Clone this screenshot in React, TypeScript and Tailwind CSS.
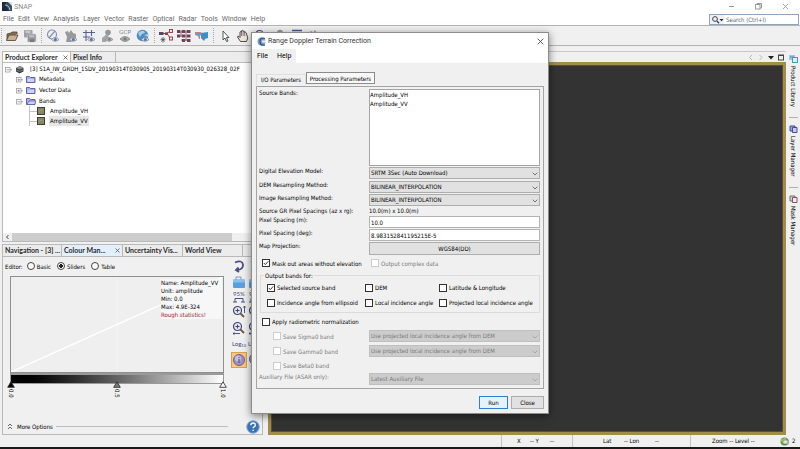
import { useId, useState } from 'react';
import type { ReactNode } from 'react';

const uiFont = 'font-["DejaVu_Sans_Condensed","DejaVu_Sans",sans-serif]';
const tabFont = 'font-["Lato","Liberation_Sans",sans-serif]';
const shellFont = 'font-["Roboto","Noto_Sans",sans-serif]';

const mainMenu = ['File', 'Edit', 'View', 'Analysis', 'Layer', 'Vector', 'Raster', 'Optical', 'Radar', 'Tools', 'Window', 'Help'];

function Icon({ size = 14, children }: { size?: number; children: ReactNode }) {
  return (
    <svg width={size} height={size} viewBox="0 0 14 14" fill="none" className="shrink-0" aria-hidden>
      {children}
    </svg>
  );
}

function Eye() {
  return (
    <>
      <path d="M5.5 10.5q3.5-4 7.5 0q-4 3.600-7.500 0z" fill="#dfe5ee" stroke="#7f8ba0" strokeWidth=".8" />
      <circle cx="9.300" cy="10.400" r="1.500" fill="#5f7599" />
    </>
  );
}

function OpenIcon() {
  return (
    <Icon>
      <path d="M2 11V5l4-1 1-1h5v2" fill="#8a7458" stroke="#4d3f30" strokeWidth=".8" />
      <path d="M1.500 11.500L4 6h9l-2.500 5.500z" fill="#c9b291" stroke="#4d3f30" strokeWidth=".8" />
    </Icon>
  );
}

function SaveAllIcon() {
  return (
    <Icon>
      <rect x="1" y="1" width="8.500" height="7.500" rx="1" fill="#9c9fa3" />
      <rect x="2.500" y="1.500" width="5" height="2.500" fill="#c5c8ca" />
      <rect x="4.500" y="5" width="8.500" height="8" rx="1" fill="#8f9296" stroke="#d5d5d5" strokeWidth=".6" />
      <rect x="6" y="6" width="5.500" height="2.500" fill="#b9bcbf" />
      <rect x="7" y="10.500" width="4" height="2.500" fill="#777b80" />
    </Icon>
  );
}

function NoDataIcon() {
  return (
    <Icon>
      <circle cx="6" cy="5.500" r="4.500" stroke="#8590b4" strokeWidth="1.200" />
      <path d="M3 9l6-7" stroke="#8590b4" strokeWidth="1.200" />
      <Eye />
    </Icon>
  );
}

function ShapesIcon() {
  return (
    <Icon>
      <path d="M1 3l3-1 1 2 2-3 2 3 3 1v4l-5 4H2l1-5z" fill="#98999b" />
      <Eye />
    </Icon>
  );
}

function GridIcon() {
  return (
    <Icon>
      <path d="M1 3.500h12M1 8h7M4 1v11M9.500 1v6" stroke="#56638f" strokeWidth="1.100" />
      <Eye />
    </Icon>
  );
}

function PinIcon() {
  return (
    <Icon>
      <circle cx="8" cy="3.500" r="2.800" fill="#939597" />
      <path d="M7 5L2 9v4h4l3-7z" fill="#a3a5a7" />
      <path d="M5.500 10.500q3.500-4 7.500 0q-4 3.600-7.500 0z" fill="#b5b7b9" stroke="#8b8d90" strokeWidth=".8" />
      <circle cx="9.300" cy="10.400" r="1.400" fill="#808286" />
    </Icon>
  );
}

function GcpIcon() {
  return (
    <span className="flex w-[14px] flex-col items-center">
      <span className={`text-[6px] leading-[6px] text-[#888b90] ${tabFont}`}>GCP</span>
      <svg width="12" height="8" viewBox="0 0 12 8" aria-hidden>
        <path d="M1 4q5-5 10 0q-5 5-10 0z" fill="#a4a6a9" stroke="#85888d" strokeWidth=".8" />
        <circle cx="6" cy="4" r="1.500" fill="#777b82" />
      </svg>
    </span>
  );
}

function GlobeIcon() {
  return (
    <Icon>
      <circle cx="6.500" cy="6.500" r="5.800" fill="#4f8ac4" />
      <path d="M2 4q3-3 6-2l1 2-3 1-2 3zM8 6l4-1v3z" fill="#a8d0ea" />
      <Eye />
    </Icon>
  );
}

function GraphIcon() {
  return (
    <Icon>
      <path d="M4 4.500h4M8 4.500L11 2M8 4.500L11 9" stroke="#9a4454" strokeWidth="1" />
      <rect x="0" y="3" width="4.500" height="3" fill="#5a4a59" />
      <rect x="6" y="3.300" width="3" height="2.700" fill="#7a4a56" />
      <rect x="10.500" y="0.500" width="3" height="3" stroke="#9a4454" />
      <rect x="10.500" y="8" width="3" height="3" stroke="#9a4454" />
      <path d="M4 8v5.500M1.500 10.700h5M2.200 9l3.600 3.600M5.800 9l-3.600 3.600" stroke="#444" strokeWidth=".7" />
    </Icon>
  );
}

function BatchIcon() {
  return (
    <Icon>
      <path d="M1 3h12M1 7h12M4 11h9M4 1v7M9 1v11" stroke="#8c4152" strokeWidth=".8" />
      <g fill="#6a4557">
        <rect x="0" y="1" width="3" height="3" />
        <rect x="5" y="1" width="3" height="3" />
        <rect x="10" y="1" width="3.500" height="3" />
        <rect x="0" y="5.500" width="3" height="3" />
        <rect x="5" y="5.500" width="3" height="3" />
        <rect x="10" y="5.500" width="3.500" height="3" />
        <rect x="5" y="10" width="3" height="3" />
        <rect x="10" y="10" width="3.500" height="3" />
      </g>
    </Icon>
  );
}

function WorldMapIcon() {
  return (
    <Icon>
      <path d="M0 3h6l1 2-2 2v3H4L3 7 0 6z" fill="#b08b93" />
      <path d="M6 4l7-1v6l-3 1-1 2-3-3z" fill="#3d8fc6" />
      <path d="M1 4h4v2H2z" fill="#5aa2cf" />
    </Icon>
  );
}

function PointerIcon() {
  return (
    <Icon>
      <path d="M5 2v9l2-2 1.500 3.500L10 12 8.500 8.500H11z" fill="#fff" stroke="#444" strokeWidth=".9" />
    </Icon>
  );
}

function HandIcon() {
  return (
    <Icon>
      <path
        d="M4.500 12.500L1.500 8q0-1.500 1.500-.5l1 1V3q.8-1 1.500 0V1.800q.8-1 1.600 0V2.500q.8-1 1.600 0v1q.9-.8 1.500.3L11.800 9l-1.300 3.500z"
        fill="#efe6dc"
        stroke="#3c3835"
        strokeWidth=".9"
      />
      <path d="M5.500 3v4M7.100 2.500V7M8.700 3v4" stroke="#3c3835" strokeWidth=".6" />
    </Icon>
  );
}

function LensIcon({ mark }: { mark?: string }) {
  return (
    <Icon>
      <circle cx="5.500" cy="5.500" r="4" fill="#e4e6ef" stroke="#43466f" strokeWidth="1.200" />
      <path d="M3.500 5.500h4M5.500 3.500v4" stroke="#43466f" />
      <path d="M8.500 8.500l3.500 3.500" stroke="#6a5a4c" strokeWidth="1.800" />
      {mark ? <path d={mark} stroke="#43466f" strokeWidth=".9" /> : null}
    </Icon>
  );
}

function RangeIcon() {
  return (
    <Icon>
      <path d="M2 1.500h10M2 4h10" stroke="#4b5a94" strokeWidth="1.500" />
      <rect x="3" y="6" width="8" height="6" stroke="#666" />
    </Icon>
  );
}

function Separator() {
  return <span className="mx-[4px] h-[15px] border-l border-dotted border-[#a9a9a9]" />;
}

const toolGroups: [string, () => ReactNode][][] = [
  [['Open product', OpenIcon], ['Save all', SaveAllIcon]],
  [
    ['No-data overlay', NoDataIcon],
    ['Geometry overlay', ShapesIcon],
    ['Graticule overlay', GridIcon],
    ['Pin overlay', PinIcon],
    ['GCP overlay', GcpIcon],
    ['World map overlay', GlobeIcon],
  ],
  [['Graph builder', GraphIcon], ['Batch processing', BatchIcon], ['World map', WorldMapIcon]],
  [
    ['Select', PointerIcon],
    ['Pan', HandIcon],
    ['Zoom', LensIcon],
    ['Pins', PinIcon],
    ['Range finder', RangeIcon],
    ['Magic wand', ShapesIcon],
  ],
];

function Toolbar() {
  return (
    <div className="flex h-[21px] shrink-0 items-center border-y border-[#b4b4b4] bg-[#f0f0f0] pl-px">
      {toolGroups.map((group, i) => (
        <div key={i} className="flex items-center">
          {i === 0 ? <span className="mr-[3px] h-[15px] border-l border-dotted border-[#a9a9a9]" /> : <Separator />}
          <div className="flex items-center gap-1">
            {group.map(([label, Glyph]) => (
              <button key={label} type="button" aria-label={label} className="flex">
                <Glyph />
              </button>
            ))}
          </div>
        </div>
      ))}
    </div>
  );
}

function TitleBar() {
  return (
    <header className="flex h-[13px] shrink-0 items-center bg-white px-[2px]">
      <svg width="10" height="9" viewBox="0 0 10 9" aria-hidden>
        <rect width="10" height="9" fill="#3a4d63" />
        <path d="M0 0h4v4l3 5H0z" fill="#1f2a3a" />
        <path d="M3 3q4 0 5 5" stroke="#b4c6d6" fill="none" />
        <path d="M6 0h4v4z" fill="#d3dde5" />
      </svg>
      <h1 className={`ml-[2px] text-[7px] leading-[10px] text-[#8a8a8a] ${shellFont}`}>SNAP</h1>
      <div className="ml-auto flex items-center gap-5 pr-[9px]">
        <button type="button" aria-label="Minimise">
          <svg width="7" height="7" viewBox="0 0 7 7" className="block"><path d="M1 3.500h5" stroke="#999" /></svg>
        </button>
        <button type="button" aria-label="Restore">
          <svg width="7" height="7" viewBox="0 0 7 7" className="block" fill="none" stroke="#999">
            <rect x=".5" y="1.500" width="4.500" height="4.500" />
            <path d="M2 1.500V.5h4.500V5H5" />
          </svg>
        </button>
        <button type="button" aria-label="Close SNAP">
          <svg width="7" height="7" viewBox="0 0 7 7" className="block"><path d="M1 1l5 5M6 1L1 6" stroke="#999" strokeWidth=".9" /></svg>
        </button>
      </div>
    </header>
  );
}

function MenuBar() {
  return (
    <div className="flex h-[12px] shrink-0 items-center bg-white pl-[3px] pr-px">
      <nav className={`flex gap-1 text-[7px] leading-[10px] text-[#686868] ${shellFont}`}>
        {mainMenu.map((item) => (
          <button key={item} type="button">{item}</button>
        ))}
      </nav>
      <label className="ml-auto flex h-[11px] w-[90px] items-center border border-[#8ea5bb] bg-white">
        <svg width="14" height="9" viewBox="0 0 14 9" className="shrink-0 bg-[#f0f0f0]" aria-hidden>
          <circle cx="5" cy="4" r="2.400" fill="none" stroke="#3b4655" />
          <path d="M7 6l2 2.300" stroke="#3b4655" strokeWidth="1.300" />
          <path d="M9.500 4h4l-2 2.200z" fill="#222" />
        </svg>
        <input
          type="search"
          aria-label="Search"
          placeholder="Search (Ctrl+I)"
          className="ml-[2px] w-full min-w-0 text-[6px] leading-[9px] outline-none placeholder:text-[#666]"
        />
      </label>
    </div>
  );
}

function PaneTab({ title, active, className }: { title: string; active?: boolean; className?: string }) {
  return (
    <button
      type="button"
      className={`flex h-full items-center whitespace-nowrap border-r border-[#b9b9b9] pl-[2px] text-left text-[7px] font-bold leading-[9px] text-[#2b2b2b] ${tabFont} ${className ?? ''}`}
    >
      {title}
      {active ? (
        <svg width="5" height="5" viewBox="0 0 5 5" className="ml-auto mr-[2px]" aria-hidden>
          <path d="M.5.5l4 4M4.500.5l-4 4" stroke="#555" strokeWidth=".8" />
        </svg>
      ) : null}
    </button>
  );
}

function Expander({ open }: { open?: boolean }) {
  return (
    <svg width="7" height="7" viewBox="0 0 7 7" className="shrink-0" fill="none" aria-hidden>
      <rect x=".5" y="1.500" width="4.500" height="4.500" fill="#fff" stroke="#a0a0a0" strokeWidth=".8" />
      <path d={open ? 'M1.500 3.750h2.600M5 3.750h2' : 'M1.500 3.750h2.600M2.750 2.500v2.600M5 3.750h2'} stroke="#777" strokeWidth=".7" />
    </svg>
  );
}

function Folder({ open }: { open?: boolean }) {
  return (
    <svg width="10" height="8" viewBox="0 0 10 8" className="shrink-0" aria-hidden>
      <path d="M.5 7.500v-6h3l1 1h4.500v5z" fill="#a9afe6" stroke="#44489a" strokeWidth=".8" />
      <path d={open ? 'M1 7.500L3 4h7L8.500 7.500z' : 'M1.500 4h6.500v3H1.500z'} fill="#cdd2fa" stroke={open ? '#44489a' : 'none'} strokeWidth=".6" />
    </svg>
  );
}

function Band() {
  return (
    <svg width="8" height="8" viewBox="0 0 8 8" className="shrink-0" aria-hidden>
      <rect x=".5" y=".5" width="7" height="7" fill="#868764" stroke="#3f4033" />
      <path d="M2 5l2-2 2 1M2 3h1" stroke="#a3a27c" strokeWidth=".8" fill="none" />
    </svg>
  );
}

function ProductExplorer() {
  return (
    <section className="flex min-h-0 flex-1 flex-col border border-[#b9b9b9] bg-white">
      <div className="flex h-[11px] shrink-0 border-b border-[#b9b9b9] bg-[#ececec]">
        <PaneTab title="Product Explorer" active className="w-[68px] bg-white" />
        <PaneTab title="Pixel Info" className="w-[45px]" />
      </div>
      <ul className="flex-1 whitespace-nowrap pl-[2px] pt-px text-[6px] leading-[10px] text-black">
        <li>
          <div className="flex items-center gap-[3px]">
            <Expander open />
            <svg width="9" height="9" viewBox="0 0 9 9" className="shrink-0" aria-hidden>
              <path d="M1 3l4-2 3.500 2v3.500l-4 2L1 6.500z" fill="#3c3e42" />
              <path d="M1 3l3.500 1.500 4-1.500L5 1z" fill="#8e9296" />
              <path d="M1.500 5l3 1.300 4-1.500" stroke="#a6a8aa" strokeWidth=".6" fill="none" />
            </svg>
            <span className="ml-[3px]">[3] S1A_IW_GRDH_1SDV_20190314T030905_20190314T030930_026328_02F</span>
          </div>
          <ul className="flex flex-col gap-px pl-[11px]">
            {['Metadata', 'Vector Data'].map((name) => (
              <li key={name} className="flex items-center gap-[3px]">
                <Expander />
                <Folder />
                <span>{name}</span>
              </li>
            ))}
            <li>
              <div className="flex items-center gap-[3px]">
                <Expander open />
                <Folder open />
                <span>Bands</span>
              </div>
              <ul className="ml-[13px]">
                {['Amplitude_VH', 'Amplitude_VV'].map((name) => (
                  <li key={name} className="flex items-center">
                    <span className="h-[10px] w-[8px] border-l border-[#c4c4c4] bg-[linear-gradient(#c4c4c4,#c4c4c4)] bg-[length:100%_1px] bg-center bg-no-repeat" />
                    <Band />
                    <span className={name === 'Amplitude_VV' ? 'ml-1 bg-[#e6e6e6] px-px' : 'ml-1 px-px'}>{name}</span>
                  </li>
                ))}
              </ul>
            </li>
          </ul>
        </li>
      </ul>
      <div className="flex h-[8px] shrink-0 items-center bg-[#f0f0f0]">
        <svg width="9" height="8" viewBox="0 0 9 8" aria-hidden><path d="M5.500 2L3.500 4l2 2" stroke="#444" fill="none" /></svg>
        <div className="h-full w-[220px] bg-[#cdcdcd]" />
      </div>
    </section>
  );
}

function Histogram() {
  const stops = [
    { label: '0.0', fill: '#000' },
    { label: '0.5', fill: '#7d7d7d' },
    { label: '1.0', fill: '#fff' },
  ];
  return (
    <div className="w-[214px]">
      <div className="relative h-[97px] border border-[#8f8f8f] bg-[#efefef]">
        <svg width="100%" height="100%" viewBox="0 0 212 95" preserveAspectRatio="none" className="absolute inset-0" aria-hidden>
          <path d="M106 0v95" stroke="#f5f5f5" />
          <path d="M0 95L212 0" stroke="#fff" strokeWidth="1.500" />
        </svg>
        <div className="absolute right-px top-[2px] w-[61px] whitespace-nowrap bg-[#f7f7f7] text-[6px] leading-[8px] text-black">
          <p>Name: Amplitude_VV</p>
          <p>Unit: amplitude</p>
          <p>Min: 0.0</p>
          <p>Max: 4.9E-324</p>
          <p className="text-[#8c1d2c]">Rough statistics!</p>
        </div>
      </div>
      <div className="h-[11px] border border-t-2 border-[#9a9a9a] bg-linear-to-r from-black to-white" />
      <div className="-mx-[3px] -mt-[3px] flex justify-between">
        {stops.map((stop) => (
          <div key={stop.label} className="relative flex w-[8px] flex-col items-center gap-px">
            <svg width="8" height="7" viewBox="0 0 8 7" aria-hidden>
              <path d="M4 .8L7.300 6.300H.7z" fill={stop.fill} stroke="#222" strokeWidth=".8" />
            </svg>
            <span className="text-[6px] leading-[8px] text-black [writing-mode:vertical-rl]">{stop.label}</span>
          </div>
        ))}
      </div>
    </div>
  );
}

function SideTools() {
  return (
    <div className="flex">
      {[0, 1].map((col) => (
        <div key={col} className="flex w-[16px] flex-col items-center gap-[2px]">
          <button type="button" aria-label="Reset">
            <Icon>
              <path d="M3 3.500q7-3 8 2q.5 5-6 5.500M6.500 8.500L4 11l3 2" stroke="#4c4f7d" strokeWidth="1.800" />
            </Icon>
          </button>
          <button type="button" aria-label="Import palette">
            <Icon>
              <path d="M4 5V2h5v3" stroke="#7d98b8" />
              <rect x="1" y="4.500" width="12" height="8.500" rx="1" fill="#5d9fdc" />
              <rect x="1" y="4.500" width="12" height="3" fill="#8cc0ee" />
            </Icon>
          </button>
          <button type="button" aria-label="Auto-adjust to 95%" className={`flex flex-col items-center text-[6px] leading-[6px] text-[#4c4f7d] ${tabFont}`}>
            95%
            <svg width="12" height="6" viewBox="0 0 12 6" fill="none" stroke="#4c4f7d" aria-hidden>
              <path d="M0 5h4M2 5V1.500h8V5M8 5h4" />
            </svg>
          </button>
          <button type="button" aria-label="Zoom vertically">
            <LensIcon mark="M12.500 1v7M11.300 2.500L12.500 1l1.200 1.500" />
          </button>
          <button type="button" aria-label="Zoom horizontally">
            <LensIcon mark="M1 12.500h7M2.500 11.300L1 12.500l1.500 1.200" />
          </button>
          <button type="button" aria-label="Logarithmic display" className={`h-[13px] text-[6px] leading-[12px] text-[#3f4276] ${tabFont}`}>
            Log<sub className="text-[4px]">10</sub>
          </button>
          <button type="button" aria-label="Extra information" className={col === 0 ? 'border border-[#d8a050] bg-[#fbc57a]' : ''}>
            <Icon>
              <circle cx="7" cy="7" r="5.500" fill="#9c93c4" stroke="#6c6490" />
              <circle cx="6" cy="5.500" r="3" fill="#c5bfe2" />
              <path d="M7 4v1M7 6v4" stroke="#5b527f" strokeWidth="1.200" />
            </Icon>
          </button>
        </div>
      ))}
    </div>
  );
}

function ColourManipulation() {
  const [editor, setEditor] = useState('Sliders');
  return (
    <section className="flex h-[191px] shrink-0 flex-col border border-[#b9b9b9]">
      <div className="flex h-[12px] shrink-0 border-b border-[#b9b9b9] bg-[#ececec]">
        <PaneTab title="Navigation - [3] ..." className="w-[59px]" />
        <PaneTab title="Colour Man..." active className="w-[61px] bg-[#e3f0fb]" />
        <PaneTab title="Uncertainty Vis..." className="w-[60px]" />
        <PaneTab title="World View" className="w-[60px]" />
      </div>
      <div className="flex flex-1 pt-[2px]">
        <div className="w-[228px] shrink-0 pl-[2px]">
          <fieldset className="flex h-[14px] items-center gap-[6px] text-[6px] leading-[9px] text-black">
            <span className="-mr-[2px]">Editor:</span>
            {['Basic', 'Sliders', 'Table'].map((name) => (
              <label key={name} className="flex items-center gap-[2px]">
                <input
                  type="radio"
                  name="editor"
                  checked={editor === name}
                  onChange={() => setEditor(name)}
                  className="size-[8px] appearance-none rounded-full border border-[#444] bg-white checked:bg-[radial-gradient(#222_45%,#fff_50%)]"
                />
                {name}
              </label>
            ))}
          </fieldset>
          <div className="pl-[5px] pt-[3px]">
            <Histogram />
          </div>
        </div>
        <SideTools />
      </div>
      <div className="flex h-[15px] shrink-0 items-center pl-1 pr-[2px]">
        <button type="button" className="flex items-center text-[6px] leading-[9px] text-black">
          <svg width="6" height="7" viewBox="0 0 6 7" className="mr-[4px]" fill="none" stroke="#444" strokeWidth=".8" aria-hidden>
            <path d="M1 3l2-2 2 2M1 6l2-2 2 2" />
          </svg>
          More Options
        </button>
        <span className="ml-[3px] h-px w-[172px] bg-[#bdbdbd]" />
        <button type="button" aria-label="Help" className="ml-auto">
          <svg width="14" height="14" viewBox="0 0 14 14" className="block" aria-hidden>
            <circle cx="7" cy="7" r="6.300" fill="#3b72b4" stroke="#8fb2d8" />
            <path d="M4.800 5.200q.2-2.200 2.300-2.200 2.200 0 2.200 1.900 0 1.200-1.300 1.900-.9.500-.9 1.500M7.100 9.700v1.400" stroke="#fff" strokeWidth="1.400" fill="none" />
          </svg>
        </button>
      </div>
    </section>
  );
}

function EditorArea() {
  return (
    <main className="flex min-w-0 flex-1 flex-col">
      <div className="flex h-[11px] shrink-0 items-center justify-end border-t border-[#c8c8c8] pr-[2px]">
        <svg width="36" height="7" viewBox="0 0 36 7" fill="none" aria-hidden>
          <path d="M4 1L1.500 3.500 4 6M11.500 1L14 3.500 11.500 6" stroke="#b5b5b5" />
          <path d="M20 2h6l-3 3.500z" fill="#222" />
          <rect x="30.500" y="1" width="5" height="5" stroke="#444" />
          <path d="M30 1.500h6" stroke="#444" />
        </svg>
      </div>
      <div className="flex-1 border-[3px] border-[#a08d4c] bg-[#333] shadow-[inset_0_0_0_1px_#5a512f]" />
    </main>
  );
}

function WindowBar() {
  const items = ['Product Library', 'Layer Manager', 'Mask Manager'];
  return (
    <aside className="flex w-[14px] shrink-0 flex-col items-center">
      {items.map((item, i) => (
        <button
          key={item}
          type="button"
          className={`flex flex-col items-center gap-[3px] text-[6px] leading-[9px] text-black ${i > 0 ? 'h-[70px] border-t border-[#b0b0b0] pt-[7px]' : 'h-[66px] pt-1'}`}
        >
          <svg width="9" height="8" viewBox="0 0 9 8" fill="none" className="shrink-0" aria-hidden>
            {i === 0 ? (
              <>
                <rect x="0" y="0" width="6" height="5" fill="#9cc8da" />
                <rect x="3.500" y="2.500" width="5" height="5" fill="#d9eef5" stroke="#4d98b4" />
                <path d="M1 2h4" stroke="#4d98b4" />
              </>
            ) : (
              <>
                <path d="M1 1h5v5H1z" fill={i === 1 ? '#9ba0dc' : '#d5cddb'} stroke={i === 1 ? '#474b9c' : '#77687d'} />
                <path d="M3.500 2.500h4.500v5H3.500z" fill={i === 1 ? '#c5c9f3' : '#f0eaf0'} stroke={i === 1 ? '#474b9c' : '#8b5064'} />
              </>
            )}
          </svg>
          <span className="whitespace-nowrap [writing-mode:vertical-rl]">{item}</span>
        </button>
      ))}
    </aside>
  );
}

function StatusBar() {
  return (
    <footer className="flex h-[14px] shrink-0 items-stretch justify-end border-b-2 border-[#1a1a1a] text-[6px] leading-[12px] text-black">
      <div className="flex w-[71px] items-center border-l border-[#c4c4c4] pl-[15px]">
        <span className="w-[13px]">X</span>
        <span className="w-[20px]">-- Y</span>
        <span>--</span>
      </div>
      <div className="flex w-[118px] items-center border-l border-[#c4c4c4] pl-[30px]">
        <span className="w-[21px]">Lat</span>
        <span className="w-[31px]">-- Lon</span>
        <span>--</span>
      </div>
      <div className="flex w-[90px] items-center border-l border-[#c4c4c4] pl-[21px]">Zoom -- Level --</div>
      <div className="flex w-[20px] items-center gap-[3px]">
        <svg width="9" height="9" viewBox="0 0 9 9" className="shrink-0" aria-hidden>
          <circle cx="4.500" cy="4.500" r="4" fill="#5f9a4a" />
          <path d="M1 3q3-3 6-1L5 4 3 7z" fill="#d8c46a" />
          <rect x="3" y="3" width="5" height="4" fill="#dbe6dc" stroke="#4c7250" strokeWidth=".6" />
        </svg>
        2
      </div>
    </footer>
  );
}

function Row({ label, children, className }: { label: string; children: (id: string) => ReactNode; className?: string }) {
  const id = useId();
  return (
    <div className={`grid grid-cols-[110px_1fr] items-start ${className ?? ''}`}>
      <label htmlFor={id} className="leading-[8px]">{label}</label>
      {children(id)}
    </div>
  );
}

function Combo({ id, label, value, disabled }: { id?: string; label?: string; value: string; disabled?: boolean }) {
  return (
    <div className="relative">
      <select
        id={id}
        aria-label={label}
        disabled={disabled}
        className="block h-[12px] w-full appearance-none border border-[#adadad] bg-[#e1e1e1] pl-px leading-[10px] disabled:border-[#bfbfbf] disabled:bg-[#ccc] disabled:text-[#7a7a7a] disabled:opacity-100"
      >
        <option>{value}</option>
      </select>
      <svg width="6" height="4" viewBox="0 0 6 4" className="pointer-events-none absolute right-[2px] top-[5px]" fill="none" aria-hidden>
        <path d="M.7.700L3 3 5.300.700" stroke={disabled ? '#a0a0a0' : '#555'} strokeWidth=".8" />
      </svg>
    </div>
  );
}

function Check({ label, checked, disabled, className }: { label: string; checked?: boolean; disabled?: boolean; className?: string }) {
  return (
    <label className={`flex items-center gap-[2px] whitespace-nowrap leading-[9px] ${disabled ? 'text-[#7a7a7a]' : ''} ${className ?? ''}`}>
      <span className="relative flex">
        <input
          type="checkbox"
          defaultChecked={checked}
          disabled={disabled}
          className="peer size-[8px] appearance-none border border-[#333] bg-white disabled:border-[#ccc]"
        />
        <svg width="8" height="8" viewBox="0 0 8 8" className="pointer-events-none absolute inset-0 hidden peer-checked:block" fill="none" aria-hidden>
          <path d="M1.800 4l1.500 1.600L6.300 2.300" stroke="#222" strokeWidth=".9" />
        </svg>
      </span>
      {label}
    </label>
  );
}

const inputClass = 'block h-[12px] w-full min-w-0 border border-[#b4b4b4] bg-white pl-px leading-[10px] outline-none';

function ProcessingParameters() {
  return (
    <div className="border border-[#a5a5a5] pb-[3px] pl-[2px] pr-[3px] pt-[2px]">
      <Row label="Source Bands:" className="mb-px">
        {(id) => (
          <select id={id} multiple className="block h-[77px] w-full overflow-hidden border border-[#a5a5a5] bg-white">
            <option className="px-0 py-px">Amplitude_VH</option>
            <option className="px-0 py-px">Amplitude_VV</option>
          </select>
        )}
      </Row>
      <Row label="Digital Elevation Model:" className="mb-[2px]">
        {(id) => <Combo id={id} value="SRTM 3Sec (Auto Download)" />}
      </Row>
      <Row label="DEM Resampling Method:" className="mb-px">
        {(id) => <Combo id={id} value="BILINEAR_INTERPOLATION" />}
      </Row>
      <Row label="Image Resampling Method:" className="mb-px">
        {(id) => <Combo id={id} value="BILINEAR_INTERPOLATION" />}
      </Row>
      <Row label="Source GR Pixel Spacings (az x rg):" className="mb-px">
        {(id) => <output id={id} className="leading-[8px]">10.0(m) x 10.0(m)</output>}
      </Row>
      <Row label="Pixel Spacing (m):" className="mb-px">
        {(id) => <input id={id} type="text" defaultValue="10.0" className={inputClass} />}
      </Row>
      <Row label="Pixel Spacing (deg):" className="mb-px">
        {(id) => <input id={id} type="text" defaultValue="8.983152841195215E-5" className={inputClass} />}
      </Row>
      <Row label="Map Projection:">
        {(id) => (
          <button id={id} type="button" className="h-[13px] border border-[#adadad] bg-[#e1e1e1] leading-[10px]">WGS84(DD)</button>
        )}
      </Row>
      <div className="flex h-[16px] items-center pl-[3px]">
        <Check label="Mask out areas without elevation" checked className="w-[109px]" />
        <Check label="Output complex data" disabled />
      </div>
      <fieldset className="ml-px border border-[#dcdcdc] pb-[5px] pl-[6px]">
        <legend className="-ml-[3px] px-px leading-[9px]">Output bands for:</legend>
        <div className="grid grid-cols-[98px_74px_1fr] gap-y-[6px] pt-[3px]">
          <Check label="Selected source band" checked />
          <Check label="DEM" />
          <Check label="Latitude & Longitude" />
          <Check label="Incidence angle from ellipsoid" />
          <Check label="Local incidence angle" />
          <Check label="Projected local incidence angle" />
        </div>
      </fieldset>
      <div className="flex h-[17px] items-center pl-[3px]">
        <Check label="Apply radiometric normalization" />
      </div>
      <div className="grid grid-cols-[110px_1fr] items-center gap-y-[3px]">
        <Check label="Save Sigma0 band" disabled className="pl-[14px]" />
        <Combo label="Sigma0 incidence angle" value="Use projected local incidence angle from DEM" disabled />
        <Check label="Save Gamma0 band" disabled className="pl-[14px]" />
        <Combo label="Gamma0 incidence angle" value="Use projected local incidence angle from DEM" disabled />
        <Check label="Save Beta0 band" disabled className="col-span-2 h-[11px] pl-[14px]" />
      </div>
      <Row label="Auxiliary File (ASAR only):" className="mt-[2px] text-[#7a7a7a]">
        {(id) => <Combo id={id} value="Latest Auxiliary File" disabled />}
      </Row>
    </div>
  );
}

function TerrainCorrectionDialog() {
  return (
    <div
      role="dialog"
      aria-labelledby="dialog-title"
      className="absolute left-1/2 top-[32px] w-[298px] -translate-x-1/2 border border-[#8c8c8c] bg-[#f0f0f0] text-[6px] text-black shadow-[0_2px_8px_rgba(0,0,0,0.5)]"
    >
      <div className="flex h-[16px] items-center bg-white pl-[5px] pr-[4px]">
        <svg width="9" height="9" viewBox="0 0 9 9" aria-hidden>
          <circle cx="4.500" cy="4.500" r="4" fill="#7d9cc6" />
          <path d="M8 1.500Q3 0 3 4.500T8 8" stroke="#2f5288" strokeWidth="1.300" fill="none" />
          <path d="M5 3.500h4v2H5z" fill="#e9eff7" />
        </svg>
        <h2 id="dialog-title" className={`ml-[2px] text-[7px] leading-[10px] text-[#333] ${shellFont}`}>Range Doppler Terrain Correction</h2>
        <button type="button" aria-label="Close dialog" className="ml-auto">
          <svg width="7" height="7" viewBox="0 0 7 7" className="block" aria-hidden>
            <path d="M.7.700l5.600 5.600M6.300.700L.7 6.300" stroke="#333" strokeWidth=".8" />
          </svg>
        </button>
      </div>
      <div className={`flex h-[14px] bg-white text-[7px] ${shellFont}`}>
        <div className="flex items-center gap-[9px] bg-[#f0f0f0] px-[5px] leading-[10px]">
          <button type="button">File</button>
          <button type="button">Help</button>
        </div>
      </div>
      <div className="px-[4px] pb-1 pt-[9px]">
        <div role="tablist" className="flex h-[13px] items-end">
          <button role="tab" type="button" className="h-[11px] w-[50px] border border-b-0 border-[#e0e0e0] leading-[10px]">I/O Parameters</button>
          <button role="tab" type="button" aria-selected className="mb-px h-[12px] w-[69px] border border-[#8c8c8c] bg-[#f8f8f8] leading-[9px]">Processing Parameters</button>
        </div>
        <div className="pt-px">
          <ProcessingParameters />
        </div>
        <div className="flex justify-end gap-[3px] pt-[7px]">
          <button type="button" className="h-[13px] w-[29px] border border-[#2f7fd0] bg-[#e5f1fb] leading-[10px]">Run</button>
          <button type="button" className="h-[13px] w-[33px] border border-[#adadad] bg-[#e1e1e1] leading-[10px]">Close</button>
        </div>
      </div>
    </div>
  );
}

export default function App() {
  return (
    <div className={`relative flex h-screen flex-col overflow-hidden bg-[#f0f0f0] ${uiFont}`}>
      <TitleBar />
      <MenuBar />
      <Toolbar />
      <div className="flex min-h-0 flex-1">
        <div className="flex w-[268px] shrink-0 flex-col gap-[2px] pl-[2px] pr-[5px] pt-[5px]">
          <ProductExplorer />
          <ColourManipulation />
        </div>
        <div className="flex min-w-0 flex-1 pt-[5px]">
          <EditorArea />
          <WindowBar />
        </div>
      </div>
      <StatusBar />
      <TerrainCorrectionDialog />
    </div>
  );
}
